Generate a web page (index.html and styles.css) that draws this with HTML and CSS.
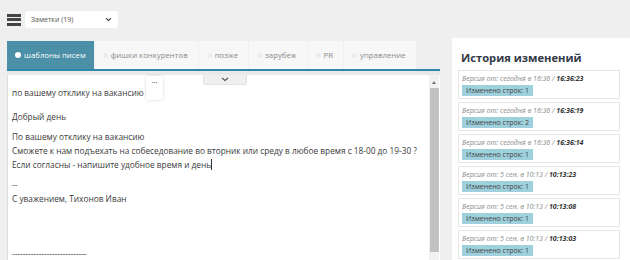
FILE: index.html
```html
<!DOCTYPE html>
<html lang="ru">
  <head>
    <meta charset="UTF-8" />
    <meta name="viewport" content="width=device-width, initial-scale=1.0" />
    <title>Заметки</title>
    <link rel="stylesheet" href="styles.css">
  </head>
  <body>
    <div class="topbar">
      <span class="burger"><i></i><i></i><i></i></span>
      <div class="notes-select">
        <span>Заметки (19)</span>
        <svg width="7" height="5" viewBox="0 0 7 5"><path d="M1 1.2 L3.5 3.6 L6 1.2" fill="none" stroke="#333" stroke-width="1.1"/></svg>
      </div>
    </div>

    <div class="main">
      <div class="workspace">
        <ul class="tabs">
          <li class="tab active"><span class="dot"></span>шаблоны писем</li>
          <li class="tab"><span class="dot"></span>фишки конкурентов</li>
          <li class="tab"><span class="dot"></span>позже</li>
          <li class="tab"><span class="dot"></span>зарубеж</li>
          <li class="tab"><span class="dot"></span>PR</li>
          <li class="tab"><span class="dot"></span>управление</li>
        </ul>

        <div class="editor-wrap">
          <div class="editor">
            <div class="toolbar-toggle">
              <svg width="8" height="5" viewBox="0 0 8 5"><path d="M1 1 L4 3.5 L7 1" fill="none" stroke="#555" stroke-width="1.2"/></svg>
            </div>
            <div class="note">
              <div class="note-title">
                <span>по вашему отклику на вакансию</span>
                <button class="more-btn">&middot;&middot;&middot;</button>
              </div>
              <p>Добрый день</p>
              <p>По вашему отклику на вакансию<br>
                Сможете к нам подъехать на собеседование во вторник или среду в любое время с 18-00 до 19-30 ?<br>
                Если согласны - напишите удобное время и день<span class="caret"></span></p>
              <p>--<br>С уважением, Тихонов Иван</p>
              <p class="divider">----------------------------</p>
            </div>
            <div class="scrollbar">
              <span class="arrow-up"></span>
              <span class="thumb"></span>
            </div>
          </div>
        </div>
      </div>

      <aside class="history">
        <h2>История изменений</h2>
        <div class="version">
          <div class="version-date">Версия от: сегодня в 16:36 / <b>16:36:23</b></div>
          <span class="badge">Изменено строк: 1</span>
        </div>
        <div class="version">
          <div class="version-date">Версия от: сегодня в 16:36 / <b>16:36:19</b></div>
          <span class="badge">Изменено строк: 2</span>
        </div>
        <div class="version">
          <div class="version-date">Версия от: сегодня в 16:36 / <b>16:36:14</b></div>
          <span class="badge">Изменено строк: 1</span>
        </div>
        <div class="version">
          <div class="version-date">Версия от: 5 сен. в 10:13 / <b>10:13:23</b></div>
          <span class="badge">Изменено строк: 1</span>
        </div>
        <div class="version">
          <div class="version-date">Версия от: 5 сен. в 10:13 / <b>10:13:08</b></div>
          <span class="badge">Изменено строк: 1</span>
        </div>
        <div class="version">
          <div class="version-date">Версия от: 5 сен. в 10:13 / <b>10:13:03</b></div>
          <span class="badge">Изменено строк: 1</span>
        </div>
      </aside>
    </div>
  </body>
</html>
```

FILE: styles.css
```css
body {
  font-family: "Open Sans", "DejaVu Sans", sans-serif;
  background-color: #efefef;
  margin: 0;
  height: 260px;
  overflow: hidden;
  color: #333;
}

.topbar {
  display: flex;
  align-items: center;
  gap: 4px;
  height: 38px;
  padding: 1px 0 0 7px;
  box-sizing: border-box;
}

.burger {
  display: flex;
  flex-direction: column;
  gap: 1.5px;
  width: 14px;
}

.burger i {
  display: block;
  height: 3px;
  background-color: #444;
}

.notes-select {
  display: flex;
  align-items: center;
  justify-content: space-between;
  width: 93px;
  height: 17px;
  padding: 0 6px 0 6px;
  box-sizing: border-box;
  background-color: #fff;
  border-radius: 3px;
  font-size: 7px;
  color: #555;
}

.main {
  display: flex;
  align-items: flex-start;
}

.workspace {
  width: 433px;
  margin-left: 7px;
  padding-top: 3px;
}

.tabs {
  display: flex;
  gap: 1px;
  list-style: none;
  margin: 0;
  padding: 0;
  border-bottom: 2px solid #2f88aa;
}

.tab {
  display: flex;
  align-items: center;
  flex-shrink: 0;
  gap: 3px;
  height: 28px;
  padding: 0 10px 0 8px;
  background-color: #f7f7f7;
  font-size: 7.8px;
  white-space: nowrap;
  color: #8a8a8a;
}

.tab .dot {
  width: 5px;
  height: 5px;
  border-radius: 50%;
  background-color: #ececec;
}

.tab.active {
  padding: 0 8px 0 8px;
  background-color: #4b90a6;
  color: #fff;
}

.tab.active .dot {
  width: 6px;
  height: 6px;
  background-color: #fff;
}

.editor-wrap {
  padding-top: 4px;
  background-color: #e9e9e9;
}

.editor {
  position: relative;
  display: flex;
  height: 185px;
  background-color: #fff;
  border-left: 1px solid #dedede;
}

.toolbar-toggle {
  position: absolute;
  top: 0;
  left: 195px;
  width: 42px;
  height: 9px;
  display: flex;
  justify-content: center;
  align-items: center;
  background-color: #efefef;
  border: 1px solid #e2e2e2;
  border-top: none;
  border-radius: 0 0 3px 3px;
}

.note {
  flex: 1;
  padding: 1px 0 0 4px;
  font-size: 8.3px;
  line-height: 14px;
  color: #3a3a3a;
}

.note-title {
  display: flex;
  align-items: flex-end;
  height: 28px;
  padding-bottom: 4px;
  box-sizing: border-box;
}

.more-btn {
  align-self: stretch;
  width: 17px;
  margin-left: 2px;
  padding: 0 0 12px;
  border: none;
  border-radius: 2px;
  background-color: #fff;
  box-shadow: 0 0 3px rgba(0, 0, 0, 0.18);
  font-size: 9px;
  color: #666;
  letter-spacing: -1px;
}

.note p {
  margin: 6px 0 0;
}

.note .divider {
  margin-top: 41px;
}

.caret {
  display: inline-block;
  width: 1px;
  height: 11px;
  vertical-align: -2px;
  background-color: #333;
}

.scrollbar {
  display: flex;
  flex-direction: column;
  align-items: center;
  width: 10px;
  padding-top: 6px;
  margin-right: 1px;
  background-color: #f1f1f1;
}

.arrow-up {
  width: 0;
  height: 0;
  border-left: 2.5px solid transparent;
  border-right: 2.5px solid transparent;
  border-bottom: 3px solid #777;
}

.thumb {
  width: 9px;
  height: 164px;
  margin-top: 4px;
  background-color: #c1c1c1;
}

.history {
  flex: 1;
  height: 222px;
  margin-left: 12px;
  padding: 10px 10px 0 6px;
  background-color: #fff;
}

.history h2 {
  margin: 0 0 2px 3px;
  font-size: 11.2px;
  line-height: 20px;
  font-weight: bold;
  color: #333a45;
}

.version {
  margin-bottom: 3px;
  padding: 2px 3px;
  border: 1px solid #e6e6e6;
  font-size: 7px;
  line-height: 12px;
}

.version-date {
  font-style: italic;
  white-space: nowrap;
  color: #888;
}

.version-date b {
  color: #333;
}

.badge {
  display: block;
  width: fit-content;
  padding: 0 4px;
  line-height: 11px;
  background-color: #9fd0dd;
  color: #444;
}
```
